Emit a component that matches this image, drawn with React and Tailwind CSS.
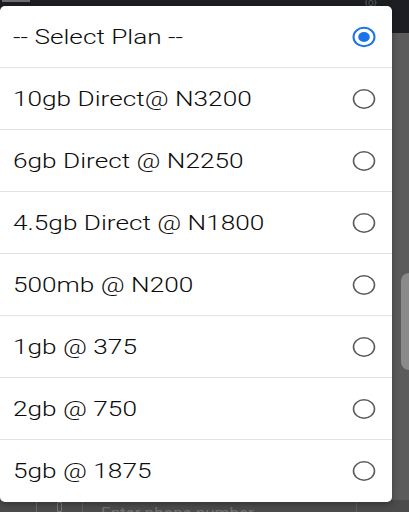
import { useState } from 'react'

const plans = [
  '-- Select Plan --',
  '10gb Direct@ N3200',
  '6gb Direct @ N2250',
  '4.5gb Direct @ N1800',
  '500mb @ N200',
  '1gb @ 375',
  '2gb @ 750',
  '5gb @ 1875',
]

function Radio({ checked }) {
  return (
    <svg width="26" height="24" viewBox="0 0 26 24" className="shrink-0">
      {checked ? (
        <>
          <ellipse cx="13" cy="12" rx="10.5" ry="9.2" fill="none" stroke="#1a73e8" strokeWidth="2" />
          <ellipse cx="13" cy="12" rx="5.8" ry="5" fill="#1a73e8" />
        </>
      ) : (
        <ellipse cx="13" cy="12" rx="10.5" ry="9.2" fill="none" stroke="#5c5c5c" strokeWidth="1.6" />
      )}
    </svg>
  )
}

export default function App() {
  const [selected, setSelected] = useState(0)

  return (
    <div className="relative w-[409px] h-[512px] overflow-hidden bg-[#5b5b5b] font-['Roboto',sans-serif]">
      {/* dimmed page behind the dialog */}
      <div className="flex flex-col h-full">
        <div className="h-[33px] bg-[#1c1e22] flex justify-between px-[2px]">
          <div className="w-[28px] h-[2px] bg-[#6b6d70]" />
          <span className="text-[10px] leading-[6px] text-[#55575a] mr-[30px]">{'{o}'}</span>
        </div>
        <div className="flex-1 flex justify-end pt-[240px]">
          <div className="w-[8px] h-[97px] rounded-l-[8px] bg-[#8a8a8a]" />
        </div>
        <div className="h-[12px] bg-[#4b4b4b] flex items-start pl-[36px]">
          <div className="h-full w-[46px] border-l border-[#6a6a6a] flex justify-center pt-[2px]">
            <div className="w-[5px] h-[10px] border border-[#777] rounded-[1px]" />
          </div>
          <div className="h-full flex-1 border-l border-r border-[#5e5e5e] pl-[18px] mr-[52px] text-[17px] leading-[26px] text-[#707070]">
            Enter phone number
          </div>
        </div>
      </div>

      {/* select dialog */}
      <div className="absolute left-0 top-[6px] w-[392px] bg-white rounded-[5px] shadow-[0_2px_6px_rgba(0,0,0,0.35)] overflow-hidden">
        {plans.map((p, i) => (
          <button
            key={p}
            onClick={() => setSelected(i)}
            className={`w-full h-[62px] flex items-center justify-between pl-[13px] pr-[15px] text-left ${i < plans.length - 1 ? 'border-b border-[#e2e2e2]' : ''}`}
          >
            <span className="text-[20px] font-light text-[#0c0c0c] origin-left scale-x-[1.31]">{p}</span>
            <Radio checked={selected === i} />
          </button>
        ))}
      </div>
    </div>
  )
}
